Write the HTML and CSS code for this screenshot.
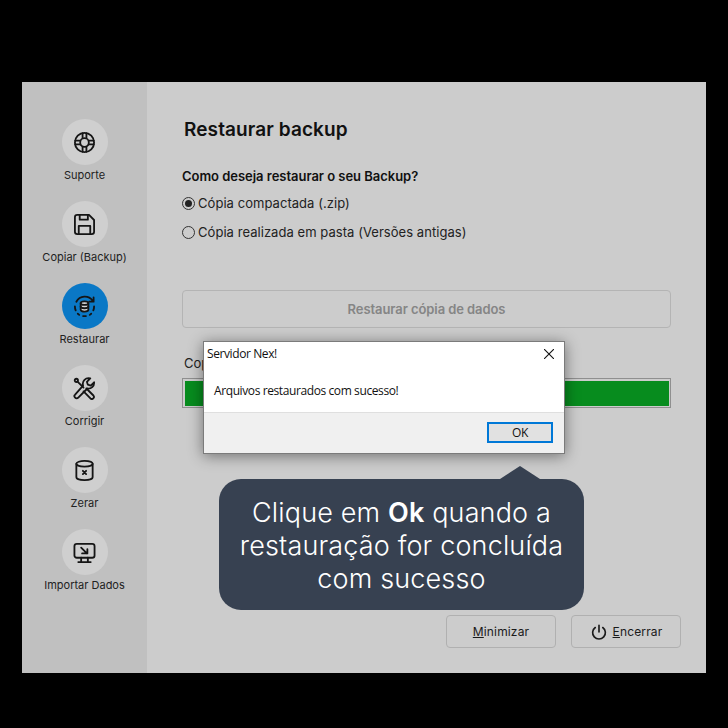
FILE: index.html
```html
<!DOCTYPE html>
<html lang="pt-BR">
<head>
    <meta charset="UTF-8">
    <meta name="viewport" content="width=device-width, initial-scale=1.0">
    <title>Servidor Nex - Restaurar backup</title>
    <link rel="stylesheet" href="styles.css">
</head>
<body>
    <div class="window">
        <nav class="sidebar">
            <div class="nav-item">
                <div class="nav-icon">
                    <svg viewBox="0 0 24 24"><circle cx="12" cy="12" r="10"/><circle cx="12" cy="12" r="4.500"/><path d="M10 2.300v5.200M14 2.300v5.200M10 16.500v5.200M14 16.500v5.200M2.300 10h5.200M2.300 14h5.200M16.500 10h5.200M16.500 14h5.200"/></svg>
                </div>
                <span class="nav-label">Suporte</span>
            </div>
            <div class="nav-item">
                <div class="nav-icon">
                    <svg viewBox="0 0 24 24"><path d="M4.500 2h12.200L22 7.300v12.200a2.500 2.500 0 0 1-2.500 2.500h-15A2.500 2.500 0 0 1 2 19.500v-15A2.500 2.500 0 0 1 4.500 2z"/><path d="M7 2v5h8.500V2M6 22v-8.500h12V22"/></svg>
                </div>
                <span class="nav-label">Copiar (Backup)</span>
            </div>
            <div class="nav-item active">
                <div class="nav-icon">
                    <svg viewBox="0 0 24 24"><path d="M3.500 7A10 10 0 0 1 20.500 6M21.500 2.500v4.500h-4.500"/><path d="M22 12a10 10 0 0 1-.8 4M19 19.500l-1.500 1.200M13.500 22h-3M6.500 20.700L5 19.500M2.800 16a10 10 0 0 1-.8-4"/><path class="db" d="M8 8.500c0-1 1.800-1.800 4-1.800s4 .8 4 1.800v7c0 1-1.800 1.800-4 1.800s-4-.8-4-1.800z"/><path d="M8 8.500c0 1 1.800 1.800 4 1.800s4-.8 4-1.800M8 12c0 1 1.800 1.800 4 1.800s4-.8 4-1.800"/></svg>
                </div>
                <span class="nav-label">Restaurar</span>
            </div>
            <div class="nav-item">
                <div class="nav-icon">
                    <svg viewBox="0 0 24 24"><circle cx="3.500" cy="3.500" r="1.700"/><path d="M5 5l6 6"/><path d="M14 12l7.300 7.300a2.200 2.200 0 0 1-3.100 3.100L11 15"/><path d="M22 5.500l-3.500 3.500-3-1-1-3L18 1.500a6 6 0 0 0-7.500 7.500L2.200 18.300a2.300 2.300 0 0 0 3.300 3.300L15 12a6 6 0 0 0 7-6.500z"/></svg>
                </div>
                <span class="nav-label">Corrigir</span>
            </div>
            <div class="nav-item">
                <div class="nav-icon">
                    <svg viewBox="0 0 24 24"><ellipse cx="12" cy="5" rx="8.500" ry="3"/><path d="M3.500 5v14c0 1.700 3.800 3 8.500 3s8.500-1.300 8.500-3V5M10.300 12.300l3.400 3.400M13.700 12.300l-3.400 3.400"/></svg>
                </div>
                <span class="nav-label">Zerar</span>
            </div>
            <div class="nav-item">
                <div class="nav-icon">
                    <svg viewBox="0 0 24 24"><rect x="1.500" y="3" width="21" height="14.500" rx="2.500"/><path d="M8.500 7l6 6M15 8.500V13H9.500M8.500 17.500V22M15.500 17.500V22M5.500 22h13"/></svg>
                </div>
                <span class="nav-label">Importar Dados</span>
            </div>
        </nav>

        <main class="content">
            <h1 class="page-title">Restaurar backup</h1>
            <p class="question">Como deseja restaurar o seu Backup?</p>
            <label class="radio-row">
                <span class="radio checked"></span>
                Cópia compactada (.zip)
            </label>
            <label class="radio-row">
                <span class="radio"></span>
                Cópia realizada em pasta (Versões antigas)
            </label>

            <div class="restore-btn">Restaurar cópia de dados</div>

            <p class="progress-label">Copiando arquivos</p>
            <div class="progress"><div class="progress-fill"></div></div>

            <div class="footer">
                <div class="footer-btn"><span><u>M</u>inimizar</span></div>
                <div class="footer-btn">
                    <svg class="power" viewBox="0 0 24 24"><path d="M12 3v9M7 6a8.500 8.500 0 1 0 10 0"/></svg>
                    <span><u>E</u>ncerrar</span>
                </div>
            </div>
        </main>

        <div class="dialog">
            <div class="dialog-title">
                <span>Servidor Nex!</span>
                <svg class="dialog-close" viewBox="0 0 10 10"><path d="M0 0L10 10M10 0L0 10"/></svg>
            </div>
            <div class="dialog-body">Arquivos restaurados com sucesso!</div>
            <div class="dialog-actions">
                <div class="dialog-ok">OK</div>
            </div>
        </div>

        <div class="tip">
            Clique em <b>Ok</b> quando a restauração for concluída com sucesso
        </div>
    </div>
</body>
</html>
```

FILE: styles.css
```css
* {
    margin: 0;
    padding: 0;
    box-sizing: border-box;
}

body {
    background: #000;
    height: 728px;
    padding: 82px 22px 55px;
    font-family: Inter, "Liberation Sans", sans-serif;
    overflow: hidden;
}

.window {
    position: relative;
    display: flex;
    height: 591px;
    background: #cccccc;
}

.sidebar {
    width: 125px;
    flex-shrink: 0;
    background: #c0c0c0;
    padding-top: 37px;
    display: flex;
    flex-direction: column;
    gap: 15px;
}

.nav-item {
    display: flex;
    flex-direction: column;
    align-items: center;
    height: 67px;
}

.nav-icon {
    width: 46px;
    height: 46px;
    border-radius: 50%;
    background: #cfcfcf;
    display: flex;
    align-items: center;
    justify-content: center;
}

.nav-icon svg {
    width: 23px;
    height: 23px;
    fill: none;
    stroke: #151515;
    stroke-width: 1.900;
    stroke-linecap: round;
    stroke-linejoin: round;
}

.nav-icon svg .db {
    fill: #d6d6d6;
}

.nav-item.active .nav-icon {
    background: #0a78c6;
}

.nav-label {
    margin-top: 3px;
    font-size: 11px;
    line-height: 14px;
    color: #222;
    white-space: nowrap;
}

.content {
    flex: 1;
    padding: 37px 35px 25px;
    display: flex;
    flex-direction: column;
}

.page-title {
    font-size: 19px;
    line-height: 22px;
    font-weight: 600;
    letter-spacing: 0.1px;
    color: #111;
    margin-left: 2px;
}

.question {
    margin-top: 27px;
    font-size: 13px;
    line-height: 16px;
    font-weight: 600;
    letter-spacing: -0.03px;
    color: #111;
}

.radio-row {
    display: flex;
    align-items: center;
    gap: 3px;
    margin-top: 11px;
    height: 16px;
    font-size: 13px;
    letter-spacing: 0.05px;
    color: #222;
}

.radio-row + .radio-row {
    margin-top: 13px;
}

.radio {
    width: 13px;
    height: 13px;
    border-radius: 50%;
    border: 1px solid #333;
    display: flex;
    align-items: center;
    justify-content: center;
}

.radio.checked::after {
    content: "";
    width: 7px;
    height: 7px;
    border-radius: 50%;
    background: #222;
}

.restore-btn {
    margin-top: 50px;
    width: 489px;
    height: 38px;
    border: 1px solid #b4b4b4;
    border-radius: 4px;
    display: flex;
    align-items: center;
    justify-content: center;
    font-size: 13px;
    font-weight: 600;
    letter-spacing: -0.08px;
    color: #858585;
}

.progress-label {
    margin-top: 27px;
    margin-left: 2px;
    font-size: 13px;
    line-height: 16px;
    color: #222;
}

.progress {
    margin-top: 7px;
    width: 489px;
    height: 30px;
    border: 1px solid #8f8f8f;
    padding: 2px 1px 1px 2px;
}

.progress-fill {
    height: 100%;
    background: #078c1e;
}

.footer {
    margin-top: auto;
    margin-right: -10px;
    display: flex;
    justify-content: flex-end;
    gap: 15px;
}

.footer-btn {
    width: 110px;
    height: 33px;
    border: 1px solid #b0b0b0;
    border-radius: 4px;
    display: flex;
    align-items: center;
    justify-content: center;
    gap: 5px;
    font-size: 12px;
    letter-spacing: 0.15px;
    color: #1a1a1a;
}

.power {
    width: 18px;
    height: 18px;
    fill: none;
    stroke: #1a1a1a;
    stroke-width: 2.200;
    stroke-linecap: round;
}

/* caixa de mensagem do Windows por cima da janela */
.dialog {
    position: absolute;
    left: 181px;
    top: 259px;
    width: 362px;
    height: 113px;
    background: #fff;
    border: 1px solid #7b7b7b;
    box-shadow: 0 2px 14px rgba(0, 0, 0, 0.45);
    font-family: "Open Sans", "Noto Sans", sans-serif;
    font-size: 12px;
    letter-spacing: -0.4px;
    color: #111;
    display: flex;
    flex-direction: column;
}

.dialog-title {
    height: 23px;
    padding: 0 10px 0 3px;
    display: flex;
    align-items: center;
    justify-content: space-between;
}

.dialog-close {
    width: 10px;
    height: 10px;
    fill: none;
    stroke: #111;
    stroke-width: 1.100;
}

.dialog-body {
    flex: 1;
    padding: 17px 10px 0;
}

.dialog-actions {
    height: 41px;
    background: #f0f0f0;
    border-top: 1px solid #dfdfdf;
    padding: 9px 11px 0 0;
    display: flex;
    justify-content: flex-end;
}

.dialog-ok {
    width: 66px;
    height: 21px;
    background: #e1e1e1;
    border: 2px solid #0078d7;
    display: flex;
    align-items: center;
    justify-content: center;
}

.tip {
    position: absolute;
    left: 197px;
    top: 397px;
    width: 365px;
    height: 131px;
    padding: 17px 10px 0;
    background: #374151;
    border-radius: 22px;
    color: #fff;
    font-size: 27px;
    font-weight: 300;
    line-height: 33px;
    letter-spacing: 0.15px;
    text-align: center;
}

.tip b {
    font-weight: 600;
}

.tip::before {
    content: "";
    position: absolute;
    left: 281px;
    top: -13px;
    border-left: 20px solid transparent;
    border-right: 20px solid transparent;
    border-bottom: 13px solid #374151;
}
```
